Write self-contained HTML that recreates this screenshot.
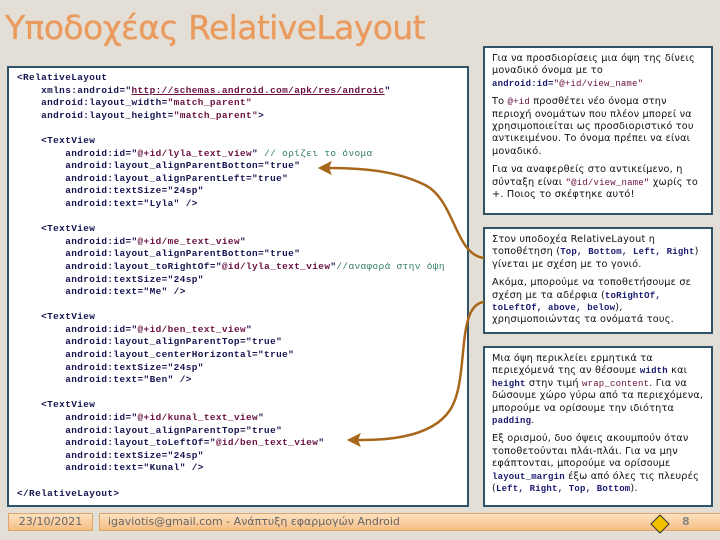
<!DOCTYPE html>
<html><head><meta charset="utf-8"><style>
*{margin:0;padding:0;box-sizing:border-box}
body{width:720px;height:540px;background:#e4dfd6;position:relative;overflow:hidden;font-family:"DejaVu Sans","Liberation Sans",sans-serif}
h1{position:absolute;left:5px;top:8px;font-size:33px;font-weight:normal;color:#ea9a5d;font-family:"DejaVu Sans","Liberation Sans",sans-serif;letter-spacing:-0.6px;text-shadow:0 0 0.8px #ea9a5d}
.box{position:absolute;background:#fff;border:2px solid #2e5266}
#code{left:7px;top:66px;width:462px;height:441px;font-family:"Liberation Mono","DejaVu Sans Mono",monospace;font-size:9.4px;line-height:12.6px;color:#141450;padding:4px 0 0 8px;white-space:pre;letter-spacing:0.4px;font-weight:bold}
.s{color:#6a1040}.c{color:#2f7a5c;font-weight:normal}.u{text-decoration:underline}
.r{left:483px;width:230px;font-size:9.7px;line-height:12.4px;color:#111;padding:5px 5px 0 7px;letter-spacing:0.2px}
.r p{margin-bottom:6px}
.m{font-family:"Liberation Mono",monospace;color:#1a1a70;font-weight:bold;font-size:9px}
.mr{font-family:"Liberation Mono",monospace;color:#6a1040;font-size:9px}
.ft{position:absolute;top:513px;height:18px;background:linear-gradient(#fde2c0,#f6bd85);border:1px solid #e0a56d;font-size:11px;color:#666;line-height:16px;font-family:"DejaVu Sans",sans-serif}
</style></head><body>
<h1>Υποδοχέας RelativeLayout</h1>
<div class="box" id="code">&lt;RelativeLayout
    xmlns:android="<span class="s u">http://schemas.android.com/apk/res/androic</span>"
    android:layout_width=<span class="s">"match_parent"</span>
    android:layout_height=<span class="s">"match_parent"</span>&gt;

    &lt;TextView
        android:id="<span class="s">@+id/lyla_text_view</span>" <span class="c">// ορίζει το όνομα</span>
        android:layout_alignParentBotton="true"
        android:layout_alignParentLeft="true"
        android:textSize="24sp"
        android:text="Lyla" /&gt;

    &lt;TextView
        android:id="<span class="s">@+id/me_text_view</span>"
        android:layout_alignParentBotton="true"
        android:layout_toRightOf="<span class="s">@id/lyla_text_view</span>"<span class="c">//αναφορά στην όψη</span>
        android:textSize="24sp"
        android:text="Me" /&gt;

    &lt;TextView
        android:id="<span class="s">@+id/ben_text_view</span>"
        android:layout_alignParentTop="true"
        android:layout_centerHorizontal="true"
        android:textSize="24sp"
        android:text="Ben" /&gt;

    &lt;TextView
        android:id="<span class="s">@+id/kunal_text_view</span>"
        android:layout_alignParentTop="true"
        android:layout_toLeftOf="<span class="s">@id/ben_text_view</span>"
        android:textSize="24sp"
        android:text="Kunal" /&gt;

&lt;/RelativeLayout&gt;</div>

<div class="box r" style="top:46px;height:169px">
<p>Για να προσδιορίσεις μια όψη της δίνεις μοναδικό όνομα με το <span class="m">android:id=</span><span class="mr">"@+id/view_name"</span></p>
<p>Το <span class="mr">@+id</span> προσθέτει νέο όνομα στην περιοχή ονομάτων που πλέον μπορεί να χρησιμοποιείται ως προσδιοριστικό του αντικειμένου. Το όνομα πρέπει να είναι μοναδικό.</p>
<p>Για να αναφερθείς στο αντικείμενο, η σύνταξη είναι <span class="mr">"@id/view_name"</span> χωρίς το +. Ποιος το σκέφτηκε αυτό!</p>
</div>
<div class="box r" style="top:227px;height:107px">
<p>Στον υποδοχέα RelativeLayout η τοποθέτηση (<span class="m">Top, Bottom, Left, Right</span>) γίνεται με σχέση με το γονιό.</p>
<p>Ακόμα, μπορούμε να τοποθετήσουμε σε σχέση με τα αδέρφια (<span class="m">toRightOf, toLeftOf, above, below</span>), χρησιμοποιώντας τα ονόματά τους.</p>
</div>
<div class="box r" style="top:346px;height:161px">
<p>Μια όψη περικλείει ερμητικά τα περιεχόμενά της αν θέσουμε <span class="m">width</span> και <span class="m">height</span> στην τιμή <span class="mr">wrap_content</span>. Για να δώσουμε χώρο γύρω από τα περιεχόμενα, μπορούμε να ορίσουμε την ιδιότητα <span class="m">padding</span>.</p>
<p>Εξ ορισμού, δυο όψεις ακουμπούν όταν τοποθετούνται πλάι-πλάι. Για να μην εφάπτονται, μπορούμε να ορίσουμε <span class="m">layout_margin</span> έξω από όλες τις πλευρές (<span class="m">Left, Right, Top, Bottom</span>).</p>
</div>

<div class="ft" style="left:8px;width:85px;text-align:center">23/10/2021</div>
<div class="ft" style="left:99px;width:630px;padding-left:8px">igaviotis@gmail.com - Ανάπτυξη εφαρμογών Android<span style="position:absolute;left:582px;font-weight:bold;color:#888">8</span></div>

<svg width="720" height="540" style="position:absolute;left:0;top:0" fill="none">
<path d="M484 258 C455 255 455 200 425 185 C395 170 360 168 326 168" stroke="#a8671a" stroke-width="2.5"/>
<path d="M320 168 L330 163 L328 168 L330 173 Z" fill="#a8671a" stroke="#a8671a" stroke-width="2"/>
<path d="M484 302 C455 305 470 380 450 410 C430 440 380 440 355 440" stroke="#a8671a" stroke-width="2.5"/>
<path d="M349 440 L359 435 L357 440 L359 445 Z" fill="#a8671a" stroke="#a8671a" stroke-width="2"/>
<path d="M660 515 L669 524 L660 533 L651 524 Z" fill="#f2c200" stroke="#333" stroke-width="1"/>
</svg>
</body></html>
